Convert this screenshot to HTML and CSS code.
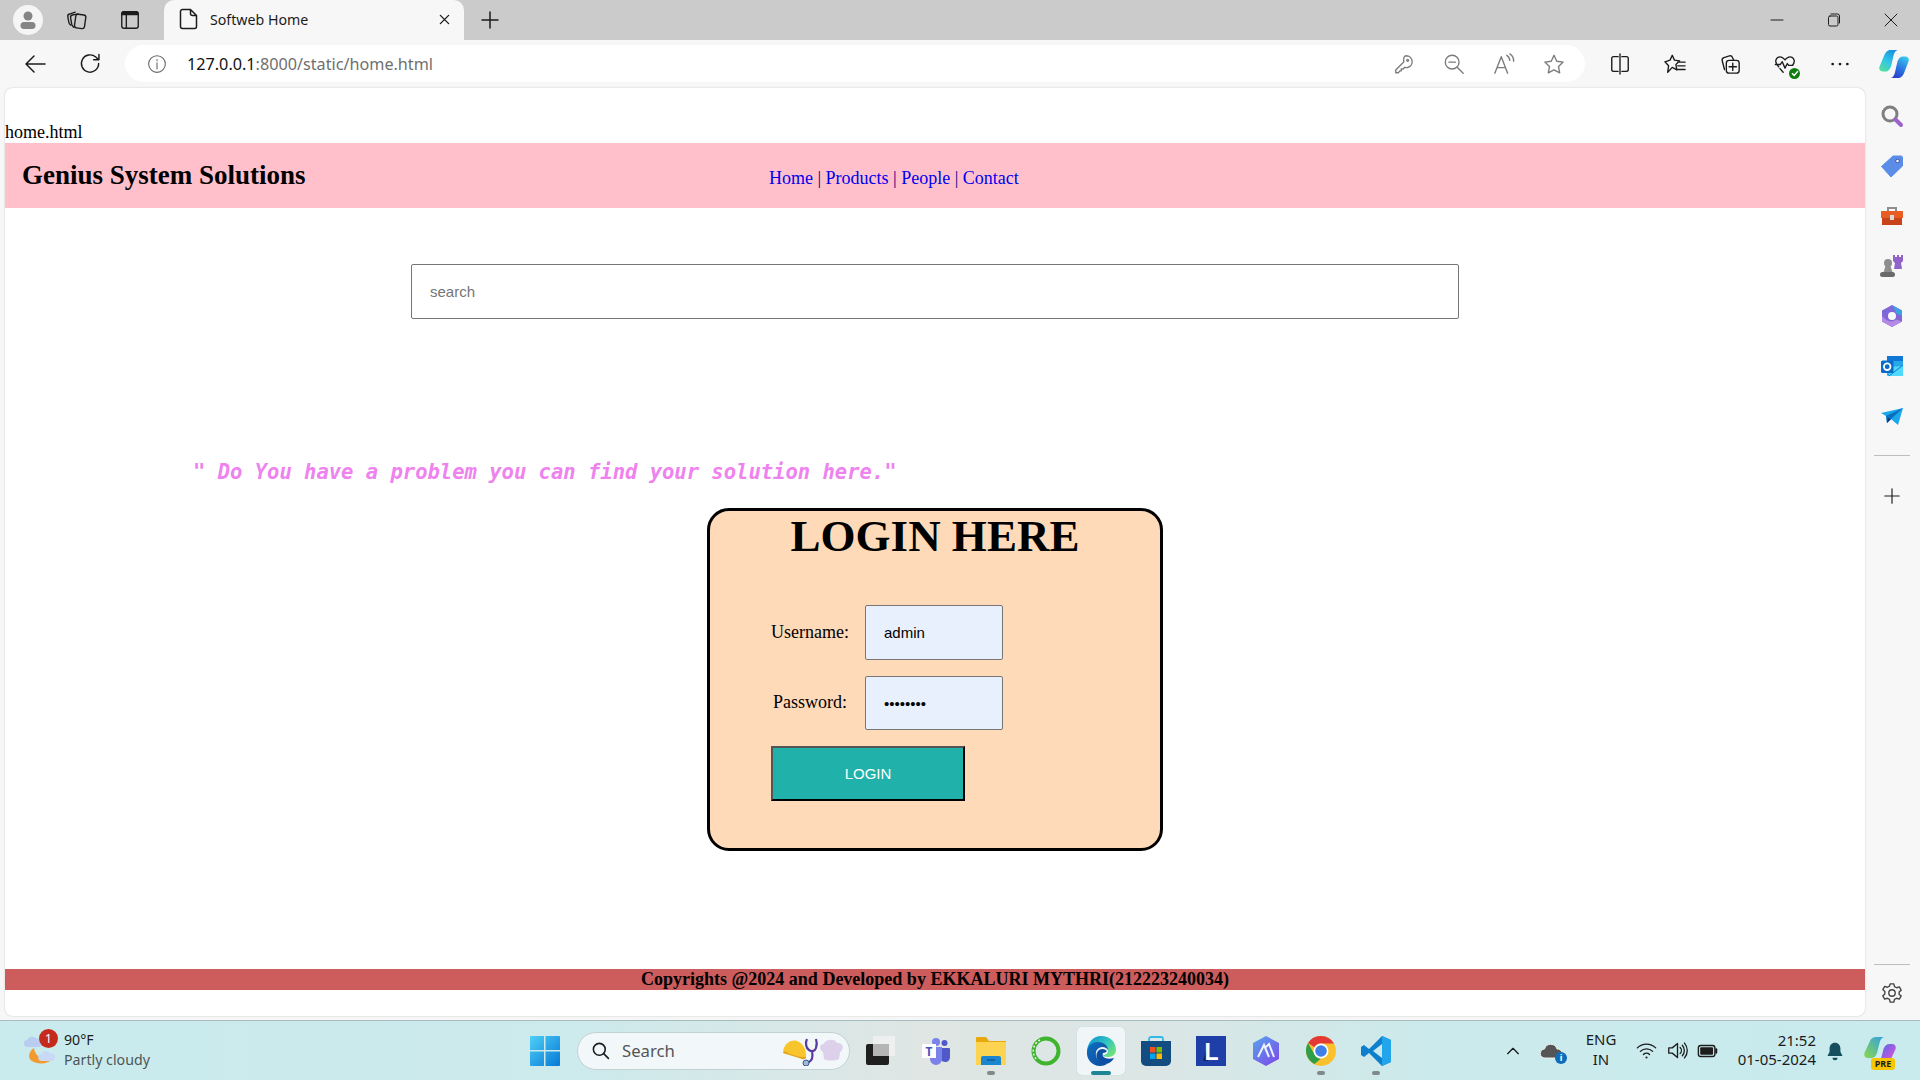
FILE: index.html
```html
<!DOCTYPE html>
<html lang="en">
  <head>
    <meta charset="UTF-8" />
    <meta name="viewport" content="width=device-width, initial-scale=1.0" />
    <title>Softweb Home</title>
    <link rel="stylesheet" href="styles.css">
  </head>

  <body>
    <div class="tabstrip">
      <div class="avatar">
        <svg viewBox="0 0 30 30" width="30" height="30"><circle cx="15" cy="15" r="15" fill="#f5f5f5"/><circle cx="15" cy="11" r="4.500" fill="#858585"/><rect x="7.500" y="17" width="15" height="7" rx="3.500" fill="#858585"/></svg>
      </div>
      <svg class="ic strip-collections" viewBox="0 0 24 24"><rect x="10" y="6" width="11" height="15" rx="2.500" transform="rotate(8 15 13)"/><path d="M8.500 20C7 19 6.500 18 6.200 16.500L5 9.500c-.3-1.600.5-2.700 2-3l6-1.200M5 17.500C3.700 16.700 3.300 15.500 3 14L2 8.500c-.3-1.500.4-2.700 1.800-3L10 3.500"/></svg>
      <svg class="ic strip-vtabs" viewBox="0 0 24 24"><rect x="3" y="3" width="18" height="18" rx="2.500"/><path d="M3 6h18V5.500A2.500 2.500 0 0 0 18.500 3h-13A2.500 2.500 0 0 0 3 5.500z" fill="#1a1a1a"/><path d="M8 6v15"/></svg>
      <div class="tab">
        <svg class="ic tab-file" viewBox="0 0 24 24"><path d="M5.500 2.500h8l6 6v11a2 2 0 0 1-2 2h-12a2 2 0 0 1-2-2v-15a2 2 0 0 1 2-2zM13.500 2.500v4a2 2 0 0 0 2 2h4"/></svg>
        <span class="tab-title">Softweb Home</span>
        <svg class="ic tab-close" viewBox="0 0 12 12"><path d="M1.500 1.500l9 9M10.500 1.500l-9 9"/></svg>
      </div>
      <svg class="ic strip-new" viewBox="0 0 20 20"><path d="M10 2v16M2 10h16"/></svg>
      <div class="win-controls">
        <div class="win-btn"><svg class="ic" viewBox="0 0 14 14"><path d="M1 7h12"/></svg></div>
        <div class="win-btn"><svg class="ic" viewBox="0 0 14 14"><rect x="1.500" y="3" width="9.500" height="10" rx="1.500"/><path d="M4 1h6.500A2 2 0 0 1 12.500 3v7"/></svg></div>
        <div class="win-btn"><svg class="ic" viewBox="0 0 14 14"><path d="M1 1l12 12M13 1 1 13"/></svg></div>
      </div>
    </div>

    <div class="toolbar">
      <svg class="ic nav-back" viewBox="0 0 24 24"><path d="M22 12H3M11 4l-8 8 8 8"/></svg>
      <svg class="ic nav-reload" viewBox="0 0 24 24"><path d="M20.500 12a9 9 0 1 1-3-6.700L20.500 8M20.800 2.500V8h-5.500"/></svg>
      <div class="address">
        <svg class="ic addr-info" viewBox="0 0 24 24"><circle cx="12" cy="12" r="10"/><path d="M12 10.500V18M12 6.500v1.500"/></svg>
        <span class="url"><span class="url-host">127.0.0.1</span>:8000/static/home.html</span>
        <div class="addr-tools">
          <svg class="ic gray" viewBox="0 0 24 24"><path d="M14.500 3a6.500 6.500 0 0 1 1.500 12.800c-1.200.3-2.300-.1-3.100-.3L11 17.500H9v2H7.500L6 21.500H3v-3l8.700-8.700c-.3-3.600 0-6.800 2.800-6.800z"/><circle cx="16" cy="8" r="1"/></svg>
          <svg class="ic gray" viewBox="0 0 24 24"><circle cx="10" cy="10" r="7.500"/><path d="M15.500 15.500 22 22M6.500 10h7"/></svg>
          <svg class="ic gray" viewBox="0 0 24 24"><path d="M2 22 9 4l7 18M4.500 16h9M15 2.500c2 1 3 3 3.300 5.500M18.500 1c2.500 1.500 4 4.500 4 8"/></svg>
          <svg class="ic gray" viewBox="0 0 24 24"><path d="M12 2.500l3 6.500 7 .9-5.100 4.800 1.300 7L12 18.300l-6.200 3.400 1.300-7L2 9.900 9 9z"/></svg>
        </div>
      </div>
      <div class="tools">
        <svg class="ic" viewBox="0 0 24 24"><path d="M10 4H5a2 2 0 0 0-2 2v12a2 2 0 0 0 2 2h5M14 4h5a2 2 0 0 1 2 2v12a2 2 0 0 1-2 2h-5M12 1v22"/></svg>
        <svg class="ic" viewBox="0 0 24 24"><path d="M9 2.500l2.400 5.300 5.600.8-4 4 1 5.900L9 15.700 4 21l1-7-4-4.400 5.600-1.800zM15 10h8M15 14h8M15 18h8"/></svg>
        <svg class="ic" viewBox="0 0 24 24"><path d="M6 18 3.500 8.500c-.4-1.600.4-3 1.900-3.500l6-1.800c1.500-.4 2.700.3 3.300 1.800L16 8"/><rect x="8" y="8" width="14" height="14" rx="3"/><path d="M15 11v8M11 15h8"/></svg>
        <div class="health">
          <svg class="ic" viewBox="0 0 24 24"><path d="M5 15C2.500 12.500 1.500 10.500 2 8c.6-3 3.500-4.500 6-3.500 1.600.6 3 1.700 4 3 1-1.300 2.400-2.400 4-3 2.500-1 5.400.5 6 3.500.4 2-.3 3.700-2 5.500M1.500 12.500H7l2-3 3 7 2.500-5 1.500 2h4.500M6.500 17l3.500 4"/></svg>
          <span class="health-badge"><svg viewBox="0 0 10 10" width="10" height="10"><path d="M2 5.200 4.200 7.400 8 3" fill="none" stroke="#fff" stroke-width="1.500"/></svg></span>
        </div>
        <svg class="ic" viewBox="0 0 24 24"><path class="solid" d="M4 10.500a1.500 1.500 0 1 0 .01 0zM12 10.500a1.500 1.500 0 1 0 .01 0zM20 10.500a1.500 1.500 0 1 0 .01 0z"/></svg>
      </div>
      <svg class="toolbar-copilot" viewBox="0 0 32 32">
        <defs>
          <linearGradient id="cpA" x1="0.700" y1="0" x2="0.200" y2="1"><stop offset="0" stop-color="#1c8fe0"/><stop offset="0.500" stop-color="#2fc4e8"/><stop offset="1" stop-color="#52e0a0"/></linearGradient>
          <linearGradient id="cpB" x1="0.800" y1="0" x2="0.300" y2="1"><stop offset="0" stop-color="#38c8ec"/><stop offset="0.600" stop-color="#2b6fe0"/><stop offset="1" stop-color="#2a3fc8"/></linearGradient>
        </defs>
        <path fill="url(#cpA)" d="M12 1h8c-2.500.6-3.500 2.500-4.500 6L13 18c-1 3-3 6-6 6H4c-3 0-4.400-2.500-3.500-5.200L5.500 7C6.700 3.800 9 1 12 1z"/>
        <path fill="url(#cpB)" d="M19.500 31h-7c2.500-.6 3.500-2.500 4.500-6l2.500-11c1-3 3-6 6-6H28c3 0 4.400 2.500 3.500 5.200L26.500 26c-1.200 3.200-4 5-7 5z"/>
      </svg>
    </div>

    <div class="workspace">
      <main class="page">
        <p class="filename">home.html</p>
        <header class="site-header">
          <h2 class="brand">Genius System Solutions</h2>
          <nav class="site-nav"><a href="#">Home</a> | <a href="#">Products</a> | <a href="#">People</a> | <a href="#">Contact</a></nav>
        </header>
        <input class="search" type="text" placeholder="search" />
        <p class="quote">" Do You have a problem you can find your solution here."</p>
        <form class="login">
          <h1>LOGIN HERE</h1>
          <div class="login-fields">
            <label for="user">Username:</label>
            <input id="user" type="text" value="admin" />
            <label for="pass">Password:</label>
            <input id="pass" type="password" value="12345678" />
          </div>
          <button class="login-btn" type="button">LOGIN</button>
        </form>
        <footer class="site-footer">Copyrights @2024 and Developed by EKKALURI MYTHRI(212223240034)</footer>
      </main>

      <aside class="sidebar">
        <svg class="side-ic" viewBox="0 0 24 24"><circle cx="10" cy="10" r="7" fill="none" stroke="#7f7f7f" stroke-width="3"/><path d="M15.500 15.500 21 21" stroke="#9b62c9" stroke-width="4" stroke-linecap="round"/></svg>
        <svg class="side-ic" viewBox="0 0 24 24"><path d="M13 2h8a1.500 1.500 0 0 1 1.500 1.500V12L11 23 1.500 12.500z" fill="#5b8de8" stroke="#5b8de8" stroke-linejoin="round"/><circle cx="17.500" cy="7" r="1.800" fill="#fff" stroke="#3c52a8"/></svg>
        <svg class="side-ic" viewBox="0 0 24 24"><path d="M8 7V4h8v3" fill="none" stroke="#8d8d8d" stroke-width="2"/><rect x="1" y="7" width="22" height="7" fill="#e85d24"/><rect x="2" y="14" width="20" height="7" fill="#c8431a"/><rect x="10" y="11" width="4" height="5" fill="#d9d9d9"/></svg>
        <svg class="side-ic" viewBox="0 0 24 24"><circle cx="8" cy="9" r="4" fill="#8e8e8e"/><path d="M5.500 12h5l2 6.500h-9z" fill="#8e8e8e"/><rect x="0" y="18" width="15" height="5" rx="2.500" fill="#6a6a6a"/><path d="M13 1h2v2h2V1h2v2h2V1h2v6l-2 2 1 6h-8l1-6-2-2z" fill="#8f63c9"/></svg>
        <svg class="side-ic" viewBox="0 0 24 24">
          <path d="M12 1 22 6.500v11L12 23 2 17.500v-11z" fill="#7f67d8"/>
          <path d="M12 1 22 6.500V12l-6-3c-1-3-2-6-4-8z" fill="#3aa3e3"/>
          <path d="M2 12v5.500L12 23l10-5.500-6-2c-3 3-8 3-14-3.500z" fill="#b58ae6"/>
          <circle cx="12" cy="12" r="4" fill="#f7f7f7"/>
        </svg>
        <svg class="side-ic" viewBox="0 0 24 24"><rect x="7" y="2" width="16" height="20" rx="1.500" fill="#28a8ea"/><rect x="7" y="2" width="16" height="5" fill="#0f78d4"/><path d="M9 13l14-1v10H9z" fill="#50d9ff"/><path d="M9 22l14-11" stroke="#0f78d4" fill="none"/><rect x="1" y="6.500" width="12.500" height="12.500" rx="1.500" fill="#0a6cc9"/><circle cx="7.200" cy="12.700" r="3.300" fill="none" stroke="#fff" stroke-width="1.800"/></svg>
        <svg class="side-ic" viewBox="0 0 24 24"><path d="M1 9 23 4 18 21l-7-6-4 4-1-7z" fill="#1aa7ec"/><path d="M6 12 23 4 11 15l-4 4z" fill="#0b6fbf"/><path d="M7 19l1-5 3 1z" fill="#14357a"/></svg>
        <div class="side-rule"></div>
        <svg class="ic side-plus" viewBox="0 0 20 20"><path d="M10 2v16M2 10h16"/></svg>
        <div class="side-rule side-rule-low"></div>
        <svg class="ic side-gear" viewBox="0 0 24 24"><circle cx="12" cy="12" r="3.500"/><path d="M10 2h4l.7 3 2.300 1.300 3-.9 2 3.500-2.200 2.100v2.600L22 15.100l-2 3.500-3-.9-2.300 1.300-.7 3h-4l-.7-3L7 17.700l-3 .9-2-3.500 2.200-2.100v-2.600L2 8.300l2-3.500 3 .9 2.300-1.300z"/></svg>
      </aside>
    </div>

    <div class="taskbar">
      <div class="weather">
        <svg class="weather-ic" viewBox="0 0 36 36">
          <path d="M14 15C9 18 7 25 12 28c6 4 16 3 21-2-9 2-18-2-19-11z" fill="#f29a2e"/>
          <path d="M8 14a3.500 3.500 0 0 1-1-7 6 6 0 0 1 10-1 4 4 0 0 1 2 8z" fill="#b9cdf0"/>
          <path d="M22 28a3.500 3.500 0 0 1-.5-7 5 5 0 0 1 9-.5 3.800 3.800 0 0 1 1.500 7.500z" fill="#c8d8f5"/>
        </svg>
        <span class="badge">1</span>
        <div class="weather-text">
          <span class="temp">90°F</span>
          <span class="cond">Partly cloudy</span>
        </div>
      </div>

      <svg class="win-logo" viewBox="0 0 30 30">
        <defs><linearGradient id="winG" x1="0" y1="0" x2="1" y2="1"><stop offset="0" stop-color="#4fd0f8"/><stop offset="1" stop-color="#0678d4"/></linearGradient></defs>
        <path fill="url(#winG)" d="M0 1a1 1 0 0 1 1-1h13v14H0zM15.500 0H29a1 1 0 0 1 1 1v13H15.500zM0 15.500h14V30H1a1 1 0 0 1-1-1zM15.500 15.500H30V29a1 1 0 0 1-1 1H15.500z"/>
      </svg>

      <div class="task-search">
        <svg class="ic task-search-ic" viewBox="0 0 24 24"><circle cx="10.500" cy="10.500" r="7.500"/><path d="M16 16l6 6"/></svg>
        <span class="task-search-text">Search</span>
        <svg class="task-search-art" viewBox="0 0 62 30">
          <path d="M0 17C0 8 8 3 14 5c6 2 9 8 9 15 0 2-1 3-3 2z" fill="#f8c52c"/>
          <path d="M0 17l19 6c2 .6 4 0 4-2-7 0-15-2-21-6z" fill="#e3a51c"/>
          <path d="M24 3c-2 4-1 9 2 11 3 2 6 1 7-2 1-3 1-6 0-9M29 15c1 5 1 9-3 11-1 .5-2 1-3 1" fill="none" stroke="#5b3a9e" stroke-width="2.200"/>
          <circle cx="23" cy="27" r="3" fill="#9fb7d6" stroke="#3a5c8c"/>
          <path d="M40 16c-4-2-4-8 1-8 1-5 11-6 13-1 6-1 8 6 3 9l-1 7c-3 2-12 2-15 0z" fill="#dcd0ea"/>
        </svg>
      </div>

      <div class="task-apps">
        <div class="app">
          <svg viewBox="0 0 30 30"><rect x="0" y="8" width="23" height="21" rx="2" fill="#1f1f1f"/><rect x="7" y="0" width="22" height="20" rx="1" fill="#f3f3f3" opacity="0.800"/><rect x="7" y="8" width="16" height="12" fill="#b5b5b5"/></svg>
        </div>
        <div class="app">
          <svg viewBox="0 0 30 30">
            <circle cx="23.500" cy="7" r="3" fill="#5059c9"/><path d="M19 12h9a1 1 0 0 1 1 1v8c0 3-2 5-5 5s-5-3-5-5z" fill="#5059c9"/>
            <circle cx="15" cy="6" r="4" fill="#7b83eb"/><path d="M9 11h12v12c0 3-3 6-6 6s-6-3-6-6z" fill="#7b83eb"/>
            <rect x="1" y="8" width="14" height="14" fill="#fff"/><text class="teams-t" x="8" y="20">T</text>
          </svg>
        </div>
        <div class="app open">
          <svg viewBox="0 0 30 30"><path d="M0 2a1 1 0 0 1 1-1h9l3 4h17v24H0z" fill="#e8a90e"/><path d="M0 6h30v23H0z" fill="#fdd451"/><path d="M5 22a2 2 0 0 1 2-2h16a2 2 0 0 1 2 2v7H5z" fill="#1a86d0"/><path d="M11 24h8" stroke="#0a4f8c" stroke-width="1.200"/></svg>
        </div>
        <div class="app">
          <svg viewBox="0 0 30 30"><circle cx="15" cy="15" r="12.500" fill="none" stroke="#3fb52f" stroke-width="4"/><path d="M9 4A12.500 12.500 0 0 0 6 24" fill="none" stroke="#f1f4f0" stroke-width="1.500" stroke-dasharray="2 2"/></svg>
        </div>
        <div class="app active">
          <svg viewBox="0 0 30 30">
            <defs>
              <linearGradient id="edgeA" x1="0" y1="0" x2="1" y2="0.700"><stop offset="0" stop-color="#0c8bd6"/><stop offset="0.600" stop-color="#33c6c0"/><stop offset="1" stop-color="#6fe07a"/></linearGradient>
              <linearGradient id="edgeB" x1="0" y1="0" x2="1" y2="1"><stop offset="0" stop-color="#0d6fc2"/><stop offset="1" stop-color="#0f4a9c"/></linearGradient>
            </defs>
            <path fill="url(#edgeA)" d="M15 0C24 0 30 6 30 14c0 4-3 7-8 7-3 0-5-1-5-2 3 0 5-2 5-4 0-5-4-8-9-8C6 7 2 12 1 16 1 7 7 0 15 0z"/>
            <path fill="url(#edgeB)" d="M1 15C2 9 7 6 12 6c5 0 10 3 10 8-2-3-6-4-9-2-4 2-4 8-1 12 2 3 6 4 9 4-2 1-4 2-7 2C6 30 0 23 1 15z"/>
            <path fill="#0c4fa5" d="M13 14c3-2 6-1 8 1-1 1-2 2-4 2-1 2 0 4 2 5 3 1 6 1 9 0-2 4-7 7-12 6-5-2-8-10-3-14z"/>
          </svg>
        </div>
        <div class="app">
          <svg viewBox="0 0 30 30"><path d="M8 6V3a2 2 0 0 1 2-2h10a2 2 0 0 1 2 2v3" fill="none" stroke="#35b8e8" stroke-width="1.800"/><path d="M0 5h30v20a5 5 0 0 1-5 5H5a5 5 0 0 1-5-5z" fill="#124c80"/><rect x="9" y="11" width="5.500" height="5.500" fill="#f25022"/><rect x="15.500" y="11" width="5.500" height="5.500" fill="#7fba00"/><rect x="9" y="17.500" width="5.500" height="5.500" fill="#00a4ef"/><rect x="15.500" y="17.500" width="5.500" height="5.500" fill="#ffb900"/></svg>
        </div>
        <div class="app">
          <svg viewBox="0 0 30 30"><rect width="30" height="30" fill="#1e3fa8"/><path d="M7 25 12 7v18z" fill="#10245f"/><text class="l-tile" x="15.500" y="24">L</text></svg>
        </div>
        <div class="app">
          <svg viewBox="0 0 30 30">
            <defs><linearGradient id="hexG" x1="0" y1="0" x2="0.800" y2="1"><stop offset="0" stop-color="#56a5ee"/><stop offset="1" stop-color="#7b4ee8"/></linearGradient></defs>
            <path fill="url(#hexG)" d="M15 0 28 7v16l-13 7-13-7V7z"/>
            <path d="M7 21 13 9l5 12M15 11l3-3 5 13" fill="none" stroke="#eef3ff" stroke-width="2"/>
          </svg>
        </div>
        <div class="app open">
          <svg viewBox="0 0 30 30"><circle cx="15" cy="15" r="15" fill="#fbc02d"/><path d="M15 0a15 15 0 0 1 13 7.500H15a7.500 7.500 0 0 0-6.500 3.700L2 7A15 15 0 0 1 15 0z" fill="#e53935"/><path d="M2 7l6.500 11.200A7.500 7.500 0 0 0 15 22.500L8.500 28A15 15 0 0 1 2 7z" fill="#2e9e48"/><circle cx="15" cy="15" r="7.500" fill="#fff"/><circle cx="15" cy="15" r="5.800" fill="#3f7fe8"/></svg>
        </div>
        <div class="app open">
          <svg viewBox="0 0 30 30"><path d="M21 0 30 4v22l-9 4L8 17l-5 4-3-2v-8l3-2 5 4z" fill="#0e7fcc"/><path d="M21 0 30 4v22l-9 4z" fill="#22a5ea"/><path d="M21 8 12 15l9 7z" fill="#c9eaec"/></svg>
        </div>
      </div>

      <div class="tray">
        <svg class="ic tray-chevron" viewBox="0 0 24 24"><path d="M4 16l8-8 8 8"/></svg>
        <div class="tray-cloud">
          <svg viewBox="0 0 24 24" width="24" height="24"><path d="M5 19a4.500 4.500 0 0 1-.5-9 6.500 6.500 0 0 1 12.500 0 4.500 4.500 0 0 1 1 9z" fill="#555" stroke="#eee"/></svg>
          <span class="tray-info">i</span>
        </div>
        <div class="tray-lang"><span>ENG</span><span>IN</span></div>
        <svg class="ic tray-wifi" viewBox="0 0 24 24"><path d="M1.500 9a15 15 0 0 1 21 0M5 13a10 10 0 0 1 14 0M8.500 16.500a5 5 0 0 1 7 0"/><circle class="solid" cx="12" cy="20" r="1.200"/></svg>
        <svg class="ic tray-vol" viewBox="0 0 24 24"><path d="M2 9v6h4l6 5V4L6 9zM15 8.500a5 5 0 0 1 0 7M17.500 6a9 9 0 0 1 0 12M20 3.500a13 13 0 0 1 0 17"/></svg>
        <svg class="ic tray-batt" viewBox="0 0 24 24"><rect x="1.500" y="6" width="18" height="12" rx="2.500"/><rect class="solid" x="3.500" y="8" width="14" height="8" rx="1"/><path d="M21 10v4" stroke-width="2.200"/></svg>
        <div class="tray-clock"><span>21:52</span><span>01-05-2024</span></div>
        <svg class="tray-bell" viewBox="0 0 24 24"><path d="M12 2c-4 0-6.500 3-6.500 7v4L3 18h18l-2.500-5V9c0-4-2.500-7-6.500-7z" fill="#154e5e"/><path d="M9 20a3 3 0 0 0 6 0z" fill="#154e5e"/></svg>
        <div class="tray-copilot">
          <svg viewBox="0 0 32 32" width="32" height="32">
            <defs>
              <linearGradient id="preA" x1="1" y1="0" x2="0" y2="1"><stop offset="0" stop-color="#2f9fe8"/><stop offset="1" stop-color="#8bd84a"/></linearGradient>
              <linearGradient id="preB" x1="0" y1="0" x2="1" y2="1"><stop offset="0" stop-color="#3d6ce8"/><stop offset="0.600" stop-color="#b25ae0"/><stop offset="1" stop-color="#f06ab0"/></linearGradient>
            </defs>
            <path fill="url(#preA)" d="M12 2h8c-2.500.6-3.500 2.500-4.500 6L13 18c-1 3-3 5-6 5H4c-3 0-4.400-2.500-3.500-5.200L5.500 7C6.700 3.800 9 2 12 2z"/>
            <path fill="url(#preB)" d="M19.500 30h-7c2.500-.6 3.500-2.500 4.500-6l2.500-10c1-3 3-5 6-5H28c3 0 4.400 2.500 3.500 5.200L26.500 25c-1.200 3.200-4 5-7 5z"/>
          </svg>
          <span class="pre">PRE</span>
        </div>
      </div>
    </div>
  </body>
</html>
```

FILE: styles.css
```css
* {
  box-sizing: border-box;
}

html,
body {
  margin: 0;
  height: 1080px;
  overflow: hidden;
}

body {
  display: flex;
  flex-direction: column;
  background-color: #f7f7f7;
  font-family: "Liberation Serif", serif;
  font-size: 18px;
}

.ic {
  display: block;
  width: 22px;
  height: 22px;
  flex: none;
  fill: none;
  stroke: #1c1c1c;
  stroke-width: 1.500;
  stroke-linejoin: round;
  stroke-linecap: round;
}

.ic .solid {
  fill: #1c1c1c;
  stroke: none;
}

.ic.gray {
  stroke: #7c7c7c;
}

/* tab strip */
.tabstrip {
  display: flex;
  align-items: center;
  height: 40px;
  padding: 0 1px 0 13px;
  background-color: #cbcbcb;
  flex: none;
}

.avatar {
  width: 30px;
  height: 30px;
}

.strip-collections {
  margin-left: 23px;
}

.strip-vtabs {
  margin-left: 31px;
}

.tab {
  display: flex;
  align-items: center;
  align-self: flex-end;
  width: 300px;
  height: 40px;
  margin-left: 23px;
  padding: 0 12px 2px 13px;
  border-radius: 10px 10px 0 0;
  background-color: #f7f7f7;
}

.tab-file {
  width: 24px;
  height: 24px;
}

.tab-title {
  margin-left: 9px;
  flex: 1;
  font-family: "Noto Sans", sans-serif;
  font-size: 14.200px;
  color: #1c1c1c;
}

.tab-close {
  width: 11px;
  height: 11px;
  margin-right: 2px;
}

.strip-new {
  width: 20px;
  height: 20px;
  margin-left: 16px;
}

.win-controls {
  display: flex;
  margin-left: auto;
}

.win-btn {
  display: flex;
  align-items: center;
  justify-content: center;
  width: 57px;
  height: 40px;
}

.win-btn .ic {
  width: 14px;
  height: 14px;
  stroke-width: 1;
}

/* toolbar */
.toolbar {
  display: flex;
  align-items: center;
  height: 48px;
  flex: none;
  padding-bottom: 1px;
}

.nav-back {
  width: 24px;
  height: 24px;
  margin-left: 23px;
}

.nav-reload {
  width: 23px;
  height: 23px;
  margin-left: 32px;
}

.address {
  display: flex;
  align-items: center;
  width: 1460px;
  height: 37px;
  margin-left: 23px;
  padding-left: 22px;
  border-radius: 19px;
  background-color: #fff;
}

.addr-info {
  width: 20px;
  height: 20px;
  stroke: #666;
  stroke-width: 1.300;
}

.url {
  margin-left: 20px;
  font-family: "Noto Sans", sans-serif;
  font-size: 16.200px;
  color: #6f6f6f;
}

.url-host {
  color: #111;
}

.addr-tools {
  display: flex;
  gap: 28px;
  margin-left: auto;
  margin-right: 20px;
}

.tools {
  display: flex;
  align-items: center;
  gap: 33px;
  margin-left: 24px;
}

.tools .ic {
  width: 22px;
  height: 22px;
}

.health {
  position: relative;
  width: 22px;
  height: 22px;
}

.health-badge {
  position: absolute;
  right: -4px;
  bottom: -4px;
  display: flex;
  align-items: center;
  justify-content: center;
  width: 11px;
  height: 11px;
  border-radius: 50%;
  background-color: #107c10;
}

.toolbar-copilot {
  width: 30px;
  height: 30px;
  margin-left: 28px;
}

/* page */
.workspace {
  display: flex;
  flex: 1;
  min-height: 0;
}

.page {
  display: flex;
  flex-direction: column;
  width: 1860px;
  margin: 0 0 4px 5px;
  border-radius: 8px;
  background-color: #fff;
  box-shadow: 0 0 2px #c4c4c4;
  overflow: hidden;
}

.filename {
  margin: 34px 0 0;
  line-height: 21px;
}

.site-header {
  display: flex;
  align-items: center;
  height: 65px;
  padding-left: 17px;
  background-color: #ffc0cb;
  flex: none;
}

.brand {
  margin: 0;
  width: 283px;
  font-size: 27px;
  white-space: nowrap;
}

.site-nav {
  margin: 5px 0 0 464px;
  color: #000080;
}

.site-nav a {
  color: #0000ee;
  text-decoration: none;
}

.search {
  display: block;
  width: 1048px;
  height: 55px;
  margin: 56px auto 0;
  padding: 0 18px;
  border: 1px solid #767676;
  border-radius: 2px;
  font-family: "Liberation Sans", sans-serif;
  font-size: 15px;
}

.quote {
  margin: 141px 0 23px 188px;
  font-family: "DejaVu Sans Mono", monospace;
  font-size: 20.500px;
  font-weight: bold;
  font-style: italic;
  line-height: 25px;
  color: #ee82ee;
}

.login {
  width: 456px;
  height: 343px;
  margin: 0 auto;
  padding: 0 0 0 61px;
  border: 3px solid #000;
  border-radius: 22px;
  background-color: #ffdab9;
  flex: none;
}

.login h1 {
  margin: 0 0 44px -61px;
  font-size: 45px;
  line-height: 50px;
  text-align: center;
}

.login-fields {
  display: grid;
  grid-template-columns: 78px 138px;
  grid-template-rows: 55px 54px;
  column-gap: 16px;
  row-gap: 16px;
  align-items: center;
}

.login-fields label {
  margin-bottom: 1px;
  text-align: center;
}

.login-fields input {
  width: 138px;
  height: 100%;
  padding: 0 18px;
  border: 1px solid #767676;
  border-radius: 2px;
  background-color: #e8f0fe;
  font-family: "Liberation Sans", sans-serif;
  font-size: 15px;
}

.login-btn {
  display: block;
  width: 194px;
  height: 55px;
  margin-top: 16px;
  border: 2px solid;
  border-color: #555 #000 #000 #555;
  background-color: #20b2aa;
  color: #fff;
  font-family: "Liberation Sans", sans-serif;
  font-size: 15px;
}

.site-footer {
  height: 21px;
  margin-top: auto;
  margin-bottom: 26px;
  background-color: #cd5c5c;
  font-weight: bold;
  line-height: 20px;
  text-align: center;
  flex: none;
}

/* edge sidebar */
.sidebar {
  display: flex;
  flex-direction: column;
  align-items: center;
  flex: 1;
  padding: 16px 1px 0 0;
}

.side-ic {
  display: block;
  width: 24px;
  height: 24px;
  margin-bottom: 26px;
  flex: none;
}

.side-rule {
  width: 36px;
  height: 1px;
  margin-top: 1px;
  background-color: #bdbdbd;
  flex: none;
}

.side-plus {
  width: 18px;
  height: 18px;
  margin-top: 31px;
  stroke-width: 1.300;
}

.side-rule-low {
  margin-top: 459px;
}

.side-gear {
  width: 22px;
  height: 22px;
  margin-top: 17px;
  stroke: #444;
}

/* taskbar */
.taskbar {
  display: flex;
  align-items: center;
  height: 60px;
  flex: none;
  border-top: 1px solid #a8bcbf;
  background: linear-gradient(90deg, #c9ebee 0, #cdeaec 30%, #dfe6e4 48%, #dbe6e5 60%, #cbeaec 75%, #c9ebee 100%);
  font-family: "Noto Sans", sans-serif;
  color: #1c1c1c;
}

.weather {
  position: relative;
  display: flex;
  align-items: center;
  width: 530px;
  padding-left: 20px;
  flex: none;
}

.weather-ic {
  width: 36px;
  height: 36px;
  flex: none;
}

.badge {
  position: absolute;
  left: 39px;
  top: -3px;
  width: 19px;
  height: 19px;
  border-radius: 50%;
  background-color: #c42b1c;
  color: #fff;
  font-size: 12px;
  line-height: 19px;
  text-align: center;
}

.weather-text {
  display: flex;
  flex-direction: column;
  margin: -2px 0 0 8px;
  font-size: 14.200px;
  line-height: 20px;
}

.cond {
  color: #4d5557;
}

.win-logo {
  width: 30px;
  height: 30px;
  flex: none;
}

.task-search {
  display: flex;
  align-items: center;
  width: 273px;
  height: 38px;
  margin-left: 17px;
  padding-left: 13px;
  border: 1px solid #c2d2d3;
  border-radius: 19px;
  background-color: #f2f8f9;
  flex: none;
}

.task-search-ic {
  width: 19px;
  height: 19px;
  stroke-width: 2;
}

.task-search-text {
  margin-left: 12px;
  font-size: 16.700px;
  color: #555;
}

.task-search-art {
  width: 62px;
  height: 30px;
  margin-left: auto;
  margin-right: 4px;
}

.task-apps {
  display: flex;
  gap: 25px;
  margin-left: 16px;
}

.app {
  position: relative;
  width: 30px;
  height: 30px;
}

.app svg {
  position: relative;
  display: block;
  width: 30px;
  height: 30px;
}

.app.open::after,
.app.active::after {
  content: "";
  position: absolute;
  left: 11px;
  bottom: -9px;
  width: 8px;
  height: 4px;
  border-radius: 2px;
  background-color: #7f8a8b;
}

.app.active::before {
  content: "";
  position: absolute;
  left: -9px;
  top: -9px;
  width: 48px;
  height: 48px;
  border-radius: 5px;
  background-color: #f0f6f7;
  box-shadow: 0 0 1px #b9c6c7;
}

.app.active::after {
  left: 5px;
  width: 20px;
  background-color: #1d8594;
}

.teams-t {
  font-family: "Noto Sans", sans-serif;
  font-size: 12px;
  font-weight: bold;
  fill: #4b53bc;
  text-anchor: middle;
}

.l-tile {
  font-family: "Liberation Sans", sans-serif;
  font-size: 23px;
  font-weight: bold;
  fill: #fff;
  text-anchor: middle;
}

.tray {
  display: flex;
  align-items: center;
  margin-left: auto;
  padding-right: 24px;
}

.tray-chevron {
  width: 16px;
  height: 16px;
  stroke-width: 2;
}

.tray-cloud {
  position: relative;
  width: 24px;
  height: 24px;
  margin-left: 19px;
}

.tray-info {
  position: absolute;
  right: -3px;
  bottom: -1px;
  width: 12px;
  height: 12px;
  border-radius: 50%;
  background-color: #0f6cbd;
  color: #fff;
  font-size: 9px;
  font-weight: bold;
  line-height: 12px;
  text-align: center;
}

.tray-lang {
  display: flex;
  flex-direction: column;
  align-items: center;
  width: 40px;
  margin: -2px 0 0 17px;
  font-size: 15px;
  line-height: 19.500px;
}

.tray-wifi {
  width: 21px;
  height: 21px;
  margin-left: 15px;
}

.tray-vol {
  width: 21px;
  height: 21px;
  margin-left: 10px;
}

.tray-batt {
  width: 22px;
  height: 22px;
  margin-left: 9px;
}

.tray-clock {
  display: flex;
  flex-direction: column;
  align-items: flex-end;
  width: 90px;
  margin: -2px 0 0 7px;
  font-size: 15px;
  line-height: 19px;
}

.tray-bell {
  width: 20px;
  height: 20px;
  margin-left: 9px;
}

.tray-copilot {
  position: relative;
  width: 32px;
  height: 32px;
  margin-left: 19px;
}

.pre {
  position: absolute;
  left: 7px;
  bottom: -3px;
  width: 24px;
  height: 12px;
  border-radius: 3px;
  background-color: #f7c600;
  color: #1c1c1c;
  font-size: 9px;
  font-weight: bold;
  line-height: 12px;
  text-align: center;
}
```
